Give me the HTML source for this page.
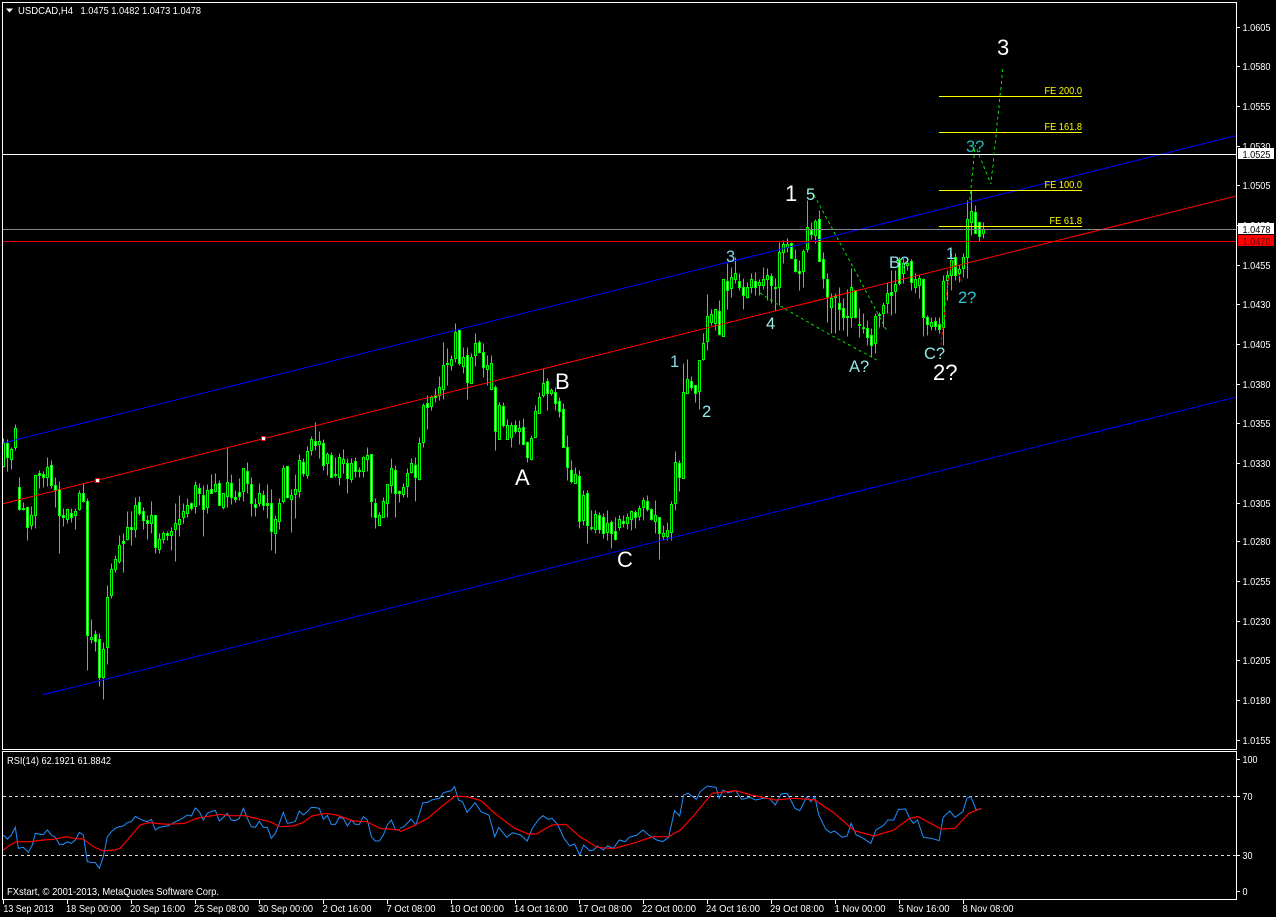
<!DOCTYPE html>
<html><head><meta charset="utf-8"><title>USDCAD,H4</title>
<style>
html,body{margin:0;padding:0;background:#000;width:1276px;height:917px;overflow:hidden}
svg{display:block;position:absolute;left:0;top:0}
text{font-family:"Liberation Sans",sans-serif;font-size:10.5px;fill:#fff}
.b{font-size:22px}.c{font-size:16.5px}
.y{fill:#ff0}
</style></head><body>
<svg width="1276" height="917" viewBox="0 0 1276 917" xmlns="http://www.w3.org/2000/svg">
<rect width="1276" height="917" fill="#000"/>
<!-- candles -->
<g transform="translate(.5,.5)" shape-rendering="crispEdges" stroke="#0f0" stroke-width="1">
<path fill="none" d="M3 438V467M7 439V471M11 447V469M15 424V450M19 477V510M23 502V510M27 506V540M31 506V529M35 474V528M39 470V488M43 471V487M47 457V486M51 460V488M55 477V507M59 481V553M63 508V526M67 508V523M71 508V522M75 508V529M79 490V510M83 483V502M87 498V670M91 619V643M95 630V651M99 633V686M103 642V699M107 585V664M111 563V598M115 555V572M119 535V563M123 533V572M127 511V540M131 511V545M135 497V537M139 496V515M143 507V529M147 515V539M151 501V533M155 515V553M159 533V553M163 531V543M167 531V540M171 527V550M175 503V561M179 495V536M183 503V523M187 498V517M191 502V510M195 481V513M199 483V505M203 485V536M207 484V513M211 474V493M215 473V492M219 480V505M223 493V509M227 448V507M231 474V504M235 490V502M239 478V500M243 468V501M247 462V493M251 477V516M255 498V516M259 483V506M263 490V510M267 484V518M271 489V550M275 515V553M279 498V529M283 465V503M287 466V498M291 489V532M295 474V518M299 454V497M303 458V476M307 446V478M311 436V455M315 422V450M319 431V458M323 439V470M327 452V475M331 452V477M335 457V477M339 453V485M343 449V473M347 458V493M351 458V482M355 457V477M359 467V477M363 456V477M367 447V471M371 454V517M375 498V528M379 512V525M383 497V517M387 484V517M391 458V493M395 465V517M399 490V502M403 483V497M407 468V497M411 458V473M415 457V501M419 437V480M423 403V447M427 395V429M431 395V410M435 388V402M439 376V400M443 342V399M447 348V385M451 355V370M455 323V362M459 330V365M463 347V373M467 347V399M471 353V383M475 333V366M479 340V353M483 343V377M487 355V385M491 355V382M495 385V450M499 402V439M503 402V427M507 419V439M511 422V447M515 420V433M519 420V444M523 418V444M527 441V462M531 435V460M535 405V437M539 392V413M543 369V397M547 378V410M551 388V395M555 387V410M559 397V417M563 403V447M567 435V480M571 460V483M575 467V483M579 470V528M583 490V525M587 490V543M591 510V530M595 510V533M599 512V533M603 513V538M607 510V540M611 520V548M615 517V540M619 515V530M623 515V527M627 513V529M631 510V530M635 510V528M639 505V520M643 497V520M647 495V511M651 508V520M655 500V533M659 517V559M663 525V540M667 522V540M671 501V540M675 451V510M679 460V491M683 363V478M687 359V393M691 376V390M695 385V402M699 360V409M703 333V360M707 294V350M711 309V325M715 310V330M719 300V335M723 279V336M727 263V309M731 267V297M735 257V283M739 273V290M743 278V309M747 282V298M751 273V293M755 272V295M759 279V295M763 267V289M767 268V300M771 273V303M775 278V310M779 242V305M783 240V263M787 238V252M791 242V258M795 249V272M799 260V290M803 249V287M807 200V252M811 222V239M815 219V243M819 210V261M823 252V288M827 273V322M831 293V333M835 293V333M839 287V330M843 298V330M847 289V336M851 268V327M855 290V318M859 308V337M863 313V333M867 320V345M871 328V357M875 313V353M879 312V327M883 302V327M887 282V313M891 270V315M895 270V313M899 257V285M903 258V283M907 260V270M911 259V290M915 273V293M919 275V298M923 278V336M927 315V335M931 317V330M935 317V330M939 317V333M943 275V345M947 270V300M951 253V290M955 253V280M959 265V282M963 253V277M967 200V278M971 190V235M975 205V233M979 222V241M983 222V238"/>
<path fill="#000" d="M2 443H4V466H2zM10 449H12V459H10zM14 428H16V447H14zM30 515H32V525H30zM34 475H36V515H34zM46 467H48V477H46zM66 509H68V519H66zM74 511H76V515H74zM78 493H80V509H78zM90 637H92V639H90zM102 649H104V677H102zM106 597H108V647H106zM110 569H112V595H110zM114 559H116V569H114zM118 545H120V561H118zM126 527H128V539H126zM134 505H136V529H134zM150 515H152V523H150zM158 539H160V549H158zM162 533H164V539H162zM170 531H172V535H170zM174 523H176V529H174zM178 519H180V524H178zM182 511H184V517H182zM186 505H188V513H186zM194 485H196V506H194zM206 490H208V507H206zM214 484H216V491H214zM222 493H224V507H222zM226 482H228V496H226zM242 468H244V491H242zM258 493H260V503H258zM274 519H276V533H274zM278 503H280V521H278zM282 468H284V501H282zM290 495H292V499H290zM294 489H296V494H294zM298 460H300V491H298zM306 451H308V475H306zM310 439H312V450H310zM318 441H320V444H318zM326 454H328V463H326zM338 457H340V477H338zM342 459H344V463H342zM350 463H352V479H350zM362 457H364V471H362zM366 455H368V459H366zM378 515H380V525H378zM382 501H384V517H382zM386 484H388V503H386zM390 468H392V485H390zM402 487H404V494H402zM406 473H408V486H406zM410 463H412V472H410zM418 443H420V479H418zM422 405H424V442H422zM430 397H432V406H430zM438 387H440V395H438zM442 365H444V389H442zM450 359H452V365H450zM454 332H456V358H454zM462 357H464V366H462zM470 357H472V383H470zM474 343H476V355H474zM486 365H488V369H486zM490 363H492V389H490zM498 405H500V439H498zM506 425H508V439H506zM510 425H512V437H510zM518 428H520V431H518zM530 438H532V459H530zM534 411H536V437H534zM538 397H540V413H538zM542 383H544V395H542zM550 390H552V393H550zM574 474H576V483H574zM582 495H584V520H582zM594 514H596V529H594zM606 523H608V532H606zM618 519H620V527H618zM626 517H628V523H626zM630 511H632V519H630zM638 508H640V516H638zM642 500H644V507H642zM654 515H656V521H654zM662 533H664V536H662zM666 530H668V536H666zM670 504H672V532H670zM674 462H676V503H674zM682 392H684V478H682zM686 379H688V393H686zM698 360H700V391H698zM702 343H704V359H702zM706 316H708V341H706zM710 314H712V322H710zM714 309H716V323H714zM722 279H724V336H722zM730 277H732V288H730zM734 273H736V279H734zM746 287H748V297H746zM750 279H752V287H750zM758 282H760V285H758zM762 279H764V285H762zM766 275H768V279H766zM778 252H780V287H778zM782 244H784V252H782zM786 244H788V247H786zM802 251H804V271H802zM806 227H808V249H806zM814 221H816V235H814zM830 298H832V307H830zM850 287H852V317H850zM874 316H876V343H874zM882 305H884V313H882zM886 293H888V303H886zM894 284H896V291H894zM902 263H904V273H902zM906 263H908V265H906zM914 279H916V287H914zM918 278H920V285H918zM930 322H932V326H930zM942 281H944V327H942zM946 275H948V280H946zM950 260H952V275H950zM958 269H960V273H958zM962 257H964V268H962zM966 219H968V257H966zM970 211H972V222H970zM982 229H984V233H982z"/>
<path fill="#fff" d="M6 443H8V457H6zM18 487H20V509H18zM22 508H24V509H22zM26 507H28V527H26zM38 473H40V475H38zM42 474H44V477H42zM50 465H52V485H50zM54 485H56V490H54zM58 489H60V515H58zM62 515H64V517H62zM70 513H72V517H70zM82 493H84V501H82zM86 501H88V635H86zM94 634H96V641H94zM98 639H100V677H98zM122 541H124V543H122zM130 527H132V529H130zM138 502H140V513H138zM142 511H144V520H142zM146 520H148V523H146zM154 515H156V547H154zM166 533H168V535H166zM190 503H192V508H190zM198 488H200V493H198zM202 495H204V509H202zM210 489H212V493H210zM218 483H220V505H218zM230 483H232V497H230zM234 497H236V499H234zM238 492H240V496H238zM246 471H248V483H246zM250 484H252V503H250zM254 504H256V507H254zM262 495H264V505H262zM266 503H268V505H266zM270 503H272V531H270zM286 466H288V497H286zM302 462H304V473H302zM314 441H316V445H314zM322 443H324V465H322zM330 455H332V477H330zM334 474H336V475H334zM346 463H348V478H346zM354 461H356V471H354zM358 470H360V471H358zM370 454H372V501H370zM374 503H376V517H374zM394 470H396V493H394zM398 491H400V493H398zM414 465H416V477H414zM426 403H428V407H426zM434 395H436V397H434zM446 363H448V364H446zM458 330H460V363H458zM466 355H468V382H466zM478 342H480V352H478zM482 352H484V367H482zM494 387H496V431H494zM502 406H504V425H502zM514 425H516V431H514zM522 427H524V444H522zM526 442H528V457H526zM546 381H548V393H546zM554 392H556V403H554zM558 401H560V411H558zM562 409H564V447H562zM566 447H568V467H566zM570 470H572V481H570zM578 476H580V521H578zM586 493H588V525H586zM590 527H592V528H590zM598 515H600V529H598zM602 517H604V533H602zM610 522H612V533H610zM614 531H616V539H614zM622 521H624V523H622zM634 512H636V517H634zM646 501H648V509H646zM650 509H652V519H650zM658 517H660V533H658zM678 463H680V477H678zM690 381H692V387H690zM694 385H696V393H694zM718 311H720V334H718zM726 281H728V290H726zM738 281H740V287H738zM742 287H744V295H742zM754 281H756V287H754zM770 276H772V285H770zM774 287H776V288H774zM790 243H792V258H790zM794 259H796V271H794zM798 271H800V273H798zM810 230H812V234H810zM818 219H820V261H818zM822 259H824V278H822zM826 279H828V297H826zM834 296H836V297H834zM838 303H840V309H838zM842 308H844V317H842zM846 316H848V317H846zM854 290H856V317H854zM858 324H860V325H858zM862 327H864V328H862zM866 328H868V337H866zM870 335H872V345H870zM878 314H880V315H878zM890 292H892V295H890zM898 259H900V283H898zM910 261H912V282H910zM922 279H924V317H922zM926 317H928V324H926zM934 321H936V326H934zM938 324H940V329H938zM954 257H956V275H954zM974 212H976V233H974zM978 222H980V236H978z"/>
</g>
<!-- channels, levels -->
<g shape-rendering="crispEdges" fill="none" stroke-width="1">
<line x1="3" y1="443" x2="1236" y2="135.7" stroke="#00f"/>
<line x1="3" y1="503.7" x2="1236" y2="196" stroke="#f00"/>
<line x1="43" y1="694.7" x2="1236" y2="397" stroke="#00f"/>
<line x1="3" y1="154.5" x2="1236" y2="154.5" stroke="#fff"/>
<line x1="3" y1="229.5" x2="1236" y2="229.5" stroke="#808890"/>
<line x1="3" y1="241.5" x2="1236" y2="241.5" stroke="#e00"/>
<path stroke="#ff0" d="M939 96.5H1082M939 132.5H1082M939 190.5H1082M939 226.5H1082"/>
<rect x="95.5" y="478.5" width="4" height="4" fill="#fff" stroke="#f00"/>
<rect x="261.5" y="436.5" width="4" height="4" fill="#fff" stroke="#f00"/>
<g stroke="#0d0" stroke-dasharray="3 3">
<polyline points="814,195 833,230 860,280 887,331"/>
<polyline points="760,293 780,306 827,333 877,360"/>
<polyline points="970,200 975,145 991,184 1003,67"/>
</g>
<polyline stroke="#e00" stroke-dasharray="3 2" points="941,345 947,290 952,258 962,282"/>
</g>
<!-- chart labels -->
<g>
<text class="b" x="997" y="55">3</text>
<text class="b" x="785" y="201">1</text>
<text class="b" x="933" y="380">2?</text>
<text class="b" x="515" y="485">A</text>
<text class="b" x="555" y="389">B</text>
<text class="b" x="617" y="567">C</text>
<text class="c" x="670" y="367" style="fill:#80dce8">1</text>
<text class="c" x="702" y="417" style="fill:#90ece8">2</text>
<text class="c" x="726" y="262" style="fill:#80dcf0">3</text>
<text class="c" x="766" y="329" style="fill:#a0f0e4">4</text>
<text class="c" x="806" y="200" style="fill:#a0f0e4">5</text>
<text class="c" x="849" y="372" style="fill:#90e8e8">A?</text>
<text class="c" x="889" y="268" style="fill:#90e0f0">B?</text>
<text class="c" x="924" y="359" style="fill:#90e8e0">C?</text>
<text class="c" x="946" y="259" style="fill:#80dcf0">1</text>
<text class="c" x="958" y="303" style="fill:#30c8d8">2?</text>
<text class="c" x="966" y="152" style="fill:#20b8b8">3?</text>
<text class="y" x="1044.5" y="94" textLength="37.5" lengthAdjust="spacingAndGlyphs">FE 200.0</text>
<text class="y" x="1044.5" y="130" textLength="37.5" lengthAdjust="spacingAndGlyphs">FE 161.8</text>
<text class="y" x="1044.5" y="188" textLength="37.5" lengthAdjust="spacingAndGlyphs">FE 100.0</text>
<text class="y" x="1049.5" y="224" textLength="32.5" lengthAdjust="spacingAndGlyphs">FE 61.8</text>
</g>
<!-- RSI -->
<g shape-rendering="crispEdges" fill="none">
<path stroke="#ddd" stroke-dasharray="3 3" d="M3 796.5H1236M3 855.5H1236"/>
</g>
<g fill="none" stroke-width="1">
<g transform="translate(0,740) scale(.33333)">
<polyline vector-effect="non-scaling-stroke" stroke="#1e90ff" points="10,285 22,297 34,285 46,262 55,325 70,322 85,337 97,315 106,280 130,284 142,270 154,285 166,292 178,313 190,313 202,305 214,310 226,300 238,277 250,285 262,365 274,367 286,368 298,385 310,350 322,290 334,275 346,265 358,260 370,258 382,248 394,245 406,229 418,236 430,242 442,245 454,238 466,270 478,262 490,260 502,258 514,252 526,245 538,240 550,233 562,225 574,228 586,204 598,215 610,240 622,220 634,215 646,211 658,243 670,232 682,220 694,240 706,242 718,235 730,205 742,235 754,260 766,262 778,244 790,262 802,262 814,295 826,280 838,250 850,217 862,250 874,248 886,244 898,213 910,225 922,215 934,202 946,203 958,205 970,238 982,226 994,253 1006,253 1018,232 1030,235 1042,258 1054,240 1066,253 1078,253 1090,230 1102,240 1114,290 1126,303 1138,303 1150,285 1162,255 1174,240 1186,268 1200,272"/>
<polyline vector-effect="non-scaling-stroke" stroke="#f00" stroke-width="1.2" points="10,330 30,315 50,305 90,305 130,300 160,298 200,290 225,296 250,297 280,320 310,333 345,330 360,325 385,297 420,255 445,248 500,253 555,250 590,235 620,230 660,223 690,227 735,227 780,238 810,245 840,260 880,258 910,247 935,228 975,220 1010,225 1060,243 1100,245 1140,265 1200,270"/>
</g>
<g transform="translate(400,760) scale(.395,.33333)">
<polyline vector-effect="non-scaling-stroke" stroke="#1e90ff" points="0,205 10,200 28,177 40,195 58,128 70,127 80,120 100,115 110,98 130,92 138,80 148,120 158,125 170,157 190,128 205,155 225,165 240,230 250,202 270,232 285,218 305,225 322,243 335,205 350,180 362,167 375,178 385,175 400,195 415,235 430,258 442,252 455,285 465,255 480,272 490,270 500,258 515,270 525,258 540,265 555,240 570,245 580,232 600,225 615,210 630,225 650,240 665,245 680,232 695,152 708,168 718,105 730,100 750,118 760,95 778,78 800,82 808,115 818,90 830,98 850,92 865,118 885,112 900,120 920,115 935,115 950,135 965,102 980,100 1000,145 1012,152 1030,110 1040,125 1050,110 1060,165 1078,208 1090,218 1100,213 1120,232 1132,228 1142,190 1155,225 1170,233 1192,250 1205,210 1225,195 1235,180 1250,180 1262,148 1280,147 1290,175 1300,190 1310,180 1325,232 1345,235 1365,242 1375,172 1392,153 1405,172 1425,155 1435,115 1445,110 1458,148 1470,148"/>
<polyline vector-effect="non-scaling-stroke" stroke="#f00" stroke-width="1.2" points="0,215 30,200 70,175 110,135 140,108 170,110 205,122 240,160 290,205 325,222 345,222 385,195 420,193 455,230 500,262 540,266 590,250 640,230 680,230 710,210 745,165 790,100 850,92 890,105 950,120 1000,115 1050,120 1100,160 1150,212 1200,228 1250,210 1290,175 1312,170 1370,207 1405,205 1440,160 1472,145"/>
</g>
</g>
<!-- frames and ticks -->
<g shape-rendering="crispEdges" fill="none" stroke="#fff">
<path d="M2.5 2.5H1236.5V749.5H2.5z"/>
<path d="M2.5 751.5H1236.5V899.5H2.5z"/>
<path d="M1237 27.5h3M1237 66.5h3M1237 106.5h3M1237 146.5h3M1237 185.5h3M1237 225.5h3M1237 265.5h3M1237 304.5h3M1237 344.5h3M1237 384.5h3M1237 423.5h3M1237 463.5h3M1237 503.5h3M1237 541.5h3M1237 581.5h3M1237 621.5h3M1237 660.5h3M1237 700.5h3M1237 740.5h3M1237 759.5h3M1237 796.5h3M1237 855.5h3M1237 891.5h3"/>
<path d="M3.5 900v4M67.5 900v4M131.5 900v4M195.5 900v4M259.5 900v4M323.5 900v4M387.5 900v4M451.5 900v4M515.5 900v4M579.5 900v4M643.5 900v4M707.5 900v4M771.5 900v4M835.5 900v4M899.5 900v4M963.5 900v4"/>
</g>
<!-- title -->
<path d="M6 8.500H13L9.500 12.500z" fill="#fff"/>
<text x="18" y="14" textLength="55" lengthAdjust="spacingAndGlyphs">USDCAD,H4</text>
<text x="80.500" y="14" textLength="120.500" lengthAdjust="spacingAndGlyphs">1.0475 1.0482 1.0473 1.0478</text>
<text x="7" y="764" textLength="104" lengthAdjust="spacingAndGlyphs">RSI(14) 62.1921 61.8842</text>
<text x="7" y="895" textLength="212" lengthAdjust="spacingAndGlyphs">FXstart, © 2001-2013, MetaQuotes Software Corp.</text>
<!-- price axis -->
<g>
<text x="1242.500" y="31" textLength="28" lengthAdjust="spacingAndGlyphs">1.0605</text>
<text x="1242.500" y="70" textLength="28" lengthAdjust="spacingAndGlyphs">1.0580</text>
<text x="1242.500" y="110" textLength="28" lengthAdjust="spacingAndGlyphs">1.0555</text>
<text x="1242.500" y="150" textLength="28" lengthAdjust="spacingAndGlyphs">1.0530</text>
<text x="1242.500" y="189" textLength="28" lengthAdjust="spacingAndGlyphs">1.0505</text>
<text x="1242.500" y="229" textLength="28" lengthAdjust="spacingAndGlyphs">1.0480</text>
<text x="1242.500" y="269" textLength="28" lengthAdjust="spacingAndGlyphs">1.0455</text>
<text x="1242.500" y="308" textLength="28" lengthAdjust="spacingAndGlyphs">1.0430</text>
<text x="1242.500" y="348" textLength="28" lengthAdjust="spacingAndGlyphs">1.0405</text>
<text x="1242.500" y="388" textLength="28" lengthAdjust="spacingAndGlyphs">1.0380</text>
<text x="1242.500" y="427" textLength="28" lengthAdjust="spacingAndGlyphs">1.0355</text>
<text x="1242.500" y="467" textLength="28" lengthAdjust="spacingAndGlyphs">1.0330</text>
<text x="1242.500" y="507" textLength="28" lengthAdjust="spacingAndGlyphs">1.0305</text>
<text x="1242.500" y="545" textLength="28" lengthAdjust="spacingAndGlyphs">1.0280</text>
<text x="1242.500" y="585" textLength="28" lengthAdjust="spacingAndGlyphs">1.0255</text>
<text x="1242.500" y="625" textLength="28" lengthAdjust="spacingAndGlyphs">1.0230</text>
<text x="1242.500" y="664" textLength="28" lengthAdjust="spacingAndGlyphs">1.0205</text>
<text x="1242.500" y="704" textLength="28" lengthAdjust="spacingAndGlyphs">1.0180</text>
<text x="1242.500" y="744" textLength="28" lengthAdjust="spacingAndGlyphs">1.0155</text>
<text x="1242.500" y="763" textLength="15" lengthAdjust="spacingAndGlyphs">100</text>
<text x="1242.500" y="800" textLength="10" lengthAdjust="spacingAndGlyphs">70</text>
<text x="1242.500" y="859" textLength="10" lengthAdjust="spacingAndGlyphs">30</text>
<text x="1242.500" y="895" textLength="5" lengthAdjust="spacingAndGlyphs">0</text>
<rect x="1238" y="148" width="36" height="11" fill="#fff"/>
<text x="1242.500" y="158" textLength="28" lengthAdjust="spacingAndGlyphs" style="fill:#000">1.0525</text>
<rect x="1238" y="223" width="36" height="11" fill="#fff"/>
<text x="1242.500" y="233" textLength="28" lengthAdjust="spacingAndGlyphs" style="fill:#000">1.0478</text>
<rect x="1238" y="235" width="36" height="11" fill="#f00"/>
<text x="1242.500" y="245" textLength="28" lengthAdjust="spacingAndGlyphs" style="fill:#600">1.0470</text>
</g>
<!-- time axis -->
<g>
<text x="3.500" y="912" textLength="50" lengthAdjust="spacingAndGlyphs">13 Sep 2013</text>
<text x="66" y="912" textLength="55" lengthAdjust="spacingAndGlyphs">18 Sep 00:00</text>
<text x="130" y="912" textLength="55" lengthAdjust="spacingAndGlyphs">20 Sep 16:00</text>
<text x="194" y="912" textLength="55" lengthAdjust="spacingAndGlyphs">25 Sep 08:00</text>
<text x="258" y="912" textLength="55" lengthAdjust="spacingAndGlyphs">30 Sep 00:00</text>
<text x="322.500" y="912" textLength="49" lengthAdjust="spacingAndGlyphs">2 Oct 16:00</text>
<text x="386.500" y="912" textLength="49" lengthAdjust="spacingAndGlyphs">7 Oct 08:00</text>
<text x="450" y="912" textLength="54" lengthAdjust="spacingAndGlyphs">10 Oct 00:00</text>
<text x="514" y="912" textLength="54" lengthAdjust="spacingAndGlyphs">14 Oct 16:00</text>
<text x="578" y="912" textLength="54" lengthAdjust="spacingAndGlyphs">17 Oct 08:00</text>
<text x="642" y="912" textLength="54" lengthAdjust="spacingAndGlyphs">22 Oct 00:00</text>
<text x="706" y="912" textLength="54" lengthAdjust="spacingAndGlyphs">24 Oct 16:00</text>
<text x="770" y="912" textLength="54" lengthAdjust="spacingAndGlyphs">29 Oct 08:00</text>
<text x="834.500" y="912" textLength="51" lengthAdjust="spacingAndGlyphs">1 Nov 00:00</text>
<text x="898.500" y="912" textLength="51" lengthAdjust="spacingAndGlyphs">5 Nov 16:00</text>
<text x="962.500" y="912" textLength="51" lengthAdjust="spacingAndGlyphs">8 Nov 08:00</text>
</g>
</svg>
</body></html>
